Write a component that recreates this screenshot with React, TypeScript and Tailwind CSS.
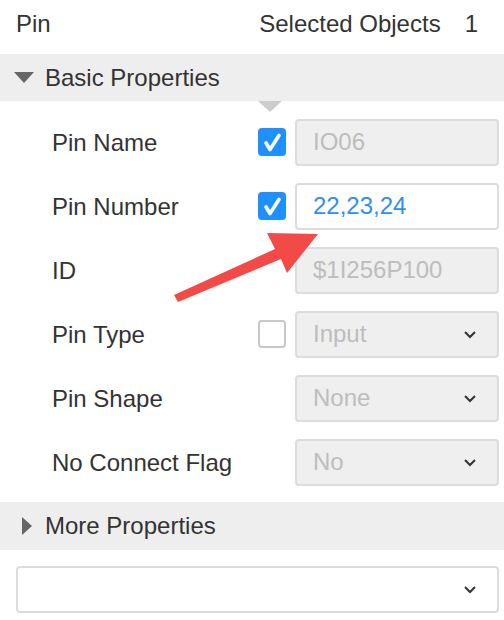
import React from "react";

type Row = {
  label: string;
  check?: "on" | "off";
  value: string;
  kind: "disabled" | "active" | "select";
};

const rows: Row[] = [
  { label: "Pin Name", check: "on", value: "IO06", kind: "disabled" },
  { label: "Pin Number", check: "on", value: "22,23,24", kind: "active" },
  { label: "ID", value: "$1I256P100", kind: "disabled" },
  { label: "Pin Type", check: "off", value: "Input", kind: "select" },
  { label: "Pin Shape", value: "None", kind: "select" },
  { label: "No Connect Flag", value: "No", kind: "select" },
];

const Chevron = () => (
  <svg width="14" height="9" viewBox="0 0 14 9" className="shrink-0">
    <path d="M2 2 L7 7 L12 2" fill="none" stroke="#333" strokeWidth="2" />
  </svg>
);

const CheckBox = ({ on }: { on: boolean }) =>
  on ? (
    <div className="w-[28px] h-[28px] rounded-[4px] bg-[#1e90ff]">
      <svg width="28" height="28" viewBox="0 0 28 28">
        <path
          d="M8 15 L12 21.5 L21 7.5"
          fill="none"
          stroke="#fff"
          strokeWidth="3.6"
          strokeLinecap="round"
          strokeLinejoin="round"
        />
      </svg>
    </div>
  ) : (
    <div className="w-[28px] h-[28px] rounded-[4px] border-2 border-[#c8c8c8] bg-white" />
  );

// a single property row
const PropRow = ({ row }: { row: Row }) => {
  const box =
    row.kind === "active"
      ? "bg-white text-[#2e8ef5]"
      : "bg-[#efefef] text-[#bdbdbd]";
  return (
    <div className="h-[64px] flex items-center pr-[5px]">
      <div className="flex-1 pl-[52px] pt-[2px] text-[#333]">{row.label}</div>
      <div className="w-[29px] flex justify-start">
        {row.check && <CheckBox on={row.check === "on"} />}
      </div>
      <div
        className={`ml-[8px] w-[204px] h-[47px] rounded-[4px] border-2 border-[#dcdcdc] flex items-center justify-between pl-[16px] pr-[20px] ${box}`}
      >
        <span>{row.value}</span>
        {row.kind === "select" && <Chevron />}
      </div>
    </div>
  );
};

export default function App() {
  return (
    <div
      className="w-[504px] h-[620px] bg-white relative overflow-hidden text-[24px] leading-none"
      style={{ fontFamily: '"Liberation Sans", Arial, sans-serif' }}
    >
      {/* top bar */}
      <div className="h-[54px] flex items-center justify-between pl-[16px] pr-[26px] pb-[7px] text-[#333]">
        <span>Pin</span>
        <span className="flex gap-[24px]">
          <span>Selected Objects</span>
          <span>1</span>
        </span>
      </div>

      {/* basic properties */}
      <div className="h-[47px] bg-[#eeeeee] flex items-center text-[#333]">
        <svg width="20" height="11" viewBox="0 0 20 11" className="ml-[14px] mr-[11px]">
          <path d="M0 0 L20 0 L10 11 Z" fill="#666" />
        </svg>
        <span>Basic Properties</span>
      </div>
      <div className="relative pt-[9px]">
        <svg
          width="24"
          height="11"
          viewBox="0 0 24 11"
          className="absolute left-[258px] top-0"
        >
          <path d="M0 0 L24 0 L12 11 Z" fill="#cccccc" />
        </svg>
        {rows.map((r) => (
          <PropRow key={r.label} row={r} />
        ))}
      </div>

      {/* more properties */}
      <div className="mt-[8px] h-[48px] bg-[#eeeeee] flex items-center text-[#333]">
        <svg width="10" height="18" viewBox="0 0 10 18" className="ml-[22px] mr-[13px]">
          <path d="M0 0 L10 9 L0 18 Z" fill="#666" />
        </svg>
        <span>More Properties</span>
      </div>
      <div className="pt-[16px] pl-[16px] pr-[5px]">
        <div className="h-[47px] rounded-[4px] border-2 border-[#dcdcdc] bg-white flex items-center justify-end pr-[20px]">
          <Chevron />
        </div>
      </div>

      {/* red annotation arrow */}
      <svg
        width="504"
        height="620"
        viewBox="0 0 504 620"
        className="absolute inset-0 pointer-events-none"
      >
        <path
          d="M318 234 L287 273 L281 259 L178 302 L174 295 L275 249 L267 233 Z"
          fill="#f44a47"
        />
      </svg>
    </div>
  );
}
